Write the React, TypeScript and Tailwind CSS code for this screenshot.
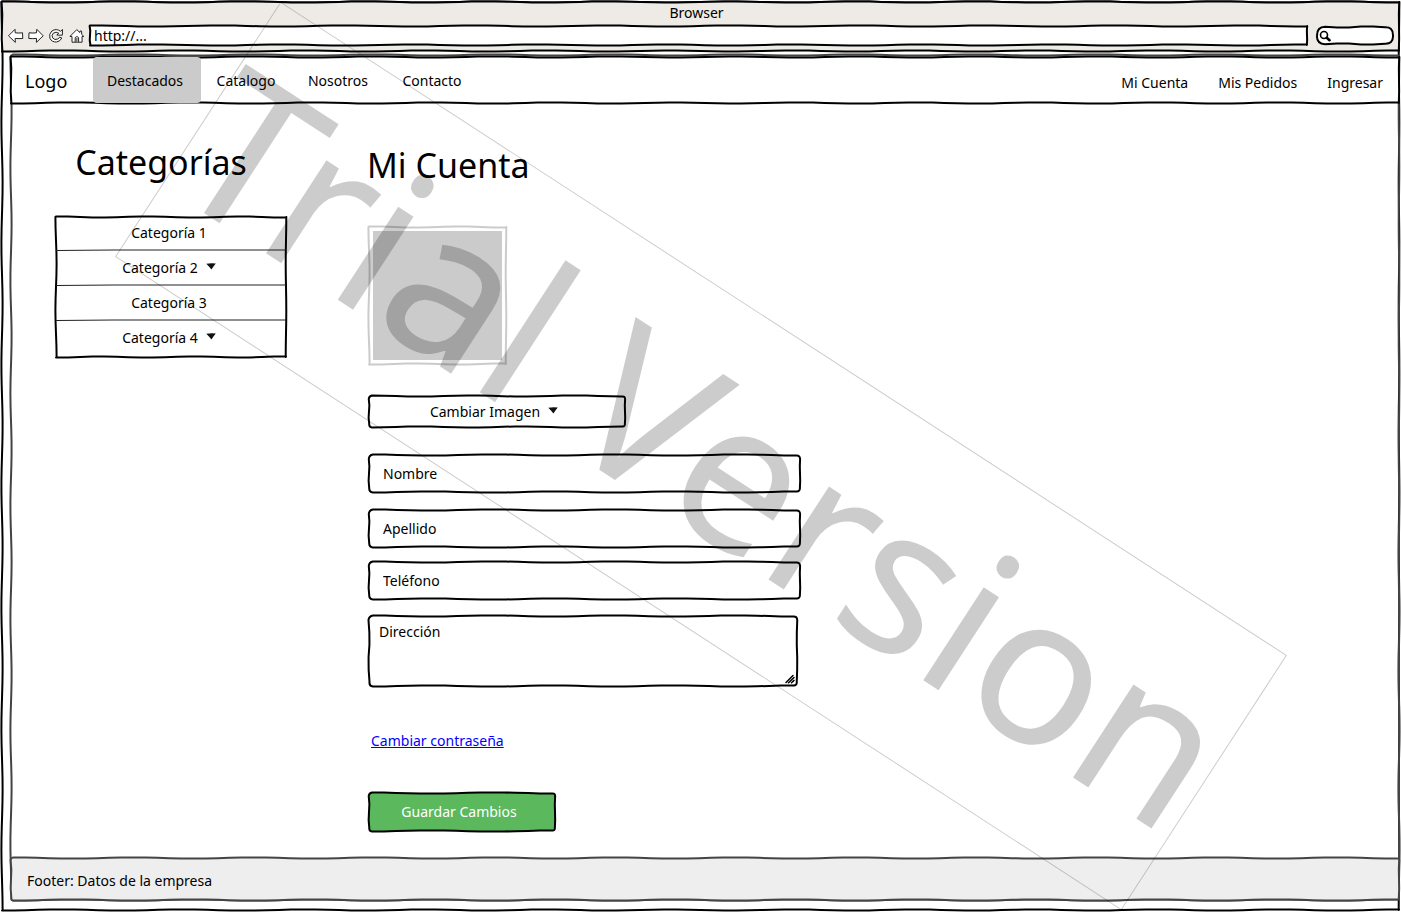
import { useLayoutEffect, useRef, useState } from "react";
import type { ReactNode } from "react";

type Size = { w: number; h: number };

function wavyPath({ w, h }: Size, r: number) {
  const m = 2;
  const wave = (t: number, len: number) => {
    const n = Math.max(1, Math.round(len / 130)) + 0.5;
    return Math.cos(t * n * 2 * Math.PI) * (len < 60 ? 0.4 : 0.6);
  };
  const pts = (len: number) => {
    const n = Math.max(4, Math.round((len - 2 * r) / 12));
    return Array.from({ length: n + 1 }, (_, i) => r + ((len - 2 * r) * i) / n);
  };
  const iw = w - 2 * m;
  const ih = h - 2 * m;
  const top = pts(iw).map((x) => [m + x, m - wave(x / iw, iw)]);
  const right = pts(ih).map((y) => [m + iw + wave(y / ih, ih) / 2, m + y]);
  const bottom = pts(iw).reverse().map((x) => [m + x, m + ih + wave(x / iw, iw)]);
  const left = pts(ih).reverse().map((y) => [m - wave(y / ih, ih), m + y]);
  const fmt = (p: number[]) => p.map((v) => v.toFixed(2)).join(" ");
  const side = (s: number[][]) => s.map((p) => "L" + fmt(p)).join("");
  const corner = (x: number, y: number, to: number[]) => (r ? `Q${x} ${y} ${fmt(to)}` : "");
  return (
    "M" + fmt(top[0]) + side(top) +
    corner(m + iw, m, right[0]) + side(right) +
    corner(m + iw, m + ih, bottom[0]) + side(bottom) +
    corner(m, m + ih, left[0]) + side(left) +
    corner(m, m, top[0]) + "Z"
  );
}

function Sketch({ r = 0, stroke = "#000", fill = "none", width = 2 }: { r?: number; stroke?: string; fill?: string; width?: number }) {
  const ref = useRef<SVGSVGElement>(null);
  const [size, setSize] = useState<Size>({ w: 0, h: 0 });
  useLayoutEffect(() => {
    const el = ref.current;
    if (!el) return;
    const measure = () => {
      const b = el.getBoundingClientRect();
      setSize({ w: b.width, h: b.height });
    };
    measure();
    const ro = new ResizeObserver(measure);
    ro.observe(el);
    return () => ro.disconnect();
  }, []);
  return (
    <svg ref={ref} aria-hidden="true" className="pointer-events-none absolute inset-0 h-full w-full overflow-visible">
      {size.w > 0 && <path d={wavyPath(size, r)} fill={fill} stroke={stroke} strokeWidth={width} strokeLinejoin="round" />}
    </svg>
  );
}

function Divider() {
  return (
    <svg aria-hidden="true" viewBox="0 0 228 4" preserveAspectRatio="none" className="pointer-events-none absolute inset-x-0 -bottom-0.5 h-1 w-full px-0.5">
      <path d="M0 2.5Q30 2 57 2T114 2T171 2T228 2" fill="none" stroke="#222" strokeWidth="1" />
    </svg>
  );
}

function Caret() {
  return (
    <svg aria-hidden="true" viewBox="0 0 10 7" className="mb-0.5 h-[7px] w-2.5">
      <path d="M0.3 0.8Q5 0 9.8 0.6Q8 2.8 5.4 6.4Q3 3.6 0.3 0.8Z" fill="#111" />
    </svg>
  );
}

const icon = { fill: "#fff", stroke: "#222", strokeWidth: 1, strokeLinejoin: "round" as const };

function BrowserBar() {
  return (
    <header className="relative h-[53px]">
      <Sketch fill="#eeebe7" />
      <div className="relative flex h-full flex-col">
        <p className="pt-0.5 pr-2 text-center leading-[22px]">Browser</p>
        <div className="flex items-center pr-1.5 pl-2">
          <div className="flex shrink-0 items-center gap-1">
            <button aria-label="Atrás" className="block">
              <svg viewBox="0 0 16 16" className="size-4" {...icon}><path d="M0.5 7.8L7 1.3L7.2 4.8Q11 5.3 14.5 4.8L14.8 10.5Q11 10.8 7.2 10.4L7.3 14.4Z" /></svg>
            </button>
            <button aria-label="Adelante" className="block">
              <svg viewBox="0 0 16 16" className="size-4" {...icon}><path d="M15.2 7.8L8.8 1.3L8.5 4.8Q5 5.3 1 4.8L0.8 10.5Q5 10.8 8.5 10.4L8.4 14.4Z" /></svg>
            </button>
            <button aria-label="Recargar" className="block">
              <svg viewBox="0 0 16 16" className="size-4" {...icon}><path d="M14.5 1.5L14.3 7.2L8.8 7L10.8 5.2Q8 3.2 5.4 5.1Q3.2 7.2 4.6 9.8Q6.5 12.6 9.8 11Q11 10.4 11.6 9.2L13.8 10Q12.2 13.5 8.6 14Q3.7 14.3 1.9 10.2Q0.6 6 3.9 3Q8.3 0 12.5 3.3Z" /></svg>
            </button>
            <button aria-label="Inicio" className="ml-px block">
              <svg viewBox="0 0 16 16" className="size-4" {...icon}><path d="M1 8.4L7.8 1.6L10.8 4.5L11 3L12.6 3.1L12.7 6.4L14.8 8.4L13 8.6L13.1 14.2L3 14.2L3 8.5Z" /><path d="M6.2 14V9.6Q7.9 7.4 9.6 9.6V14M7.9 10V14" /></svg>
            </button>
          </div>
          <div className="relative ml-[3px] h-[23px] min-w-0 flex-1">
            <Sketch fill="#fff" />
            <input aria-label="Dirección web" defaultValue="http://..." className="relative block h-full w-full bg-transparent px-1.5 outline-none" />
          </div>
          <div className="relative ml-1.5 flex h-[21px] w-20 shrink-0 items-center">
            <Sketch fill="#fff" r={8} />
            <svg aria-hidden="true" viewBox="0 0 12 12" className="relative ml-1 size-3" fill="none" stroke="#000" strokeLinecap="round"><circle cx="5" cy="5" r="3.5" strokeWidth="1.6" /><path d="M7.8 7.8L10.5 10.2" strokeWidth="2.6" /></svg>
            <input aria-label="Buscar" className="relative min-w-0 flex-1 bg-transparent outline-none" />
          </div>
        </div>
      </div>
    </header>
  );
}

function Navbar() {
  return (
    <nav className="relative mt-0.5 h-[50px]">
      <Sketch fill="#fff" />
      <div className="relative flex h-full items-center justify-between">
        <div className="flex h-full items-center">
          <a href="#logo" className="w-[84px] pt-0.5 pl-4 text-lg">Logo</a>
          <a href="#destacados" className="flex h-[46px] w-[108px] items-center justify-center rounded bg-[#cbcbcb] pt-0.5 pr-1">Destacados</a>
          <a href="#catalogo" className="w-[90px] pt-0.5 text-center">Catalogo</a>
          <a href="#nosotros" className="w-[94px] pt-0.5 text-center">Nosotros</a>
          <a href="#contacto" className="w-[94px] pt-0.5 text-center">Contacto</a>
        </div>
        <div className="flex gap-[30px] pt-1.5 pr-[18px]">
          <a href="#cuenta">Mi Cuenta</a>
          <a href="#pedidos">Mis Pedidos</a>
          <a href="#ingresar">Ingresar</a>
        </div>
      </div>
    </nav>
  );
}

const categories = [
  { name: "Categoría 1", menu: false },
  { name: "Categoría 2", menu: true },
  { name: "Categoría 3", menu: false },
  { name: "Categoría 4", menu: true },
];

function Sidebar() {
  return (
    <aside className="w-[234px] shrink-0 pt-[31px]">
      <h2 className="pr-5 text-center text-[34px] leading-[52px]">Categorías</h2>
      <ul className="relative mt-[27px] pb-1">
        <Sketch />
        {categories.map((c, i) => (
          <li key={c.name} className="relative h-[35px]">
            <button className="flex h-full w-full items-center justify-center gap-2 pr-1">
              {c.name}
              {c.menu && <Caret />}
            </button>
            {i < categories.length - 1 && <Divider />}
          </li>
        ))}
      </ul>
    </aside>
  );
}

function Field({ id, label, className }: { id: string; label: string; className: string }) {
  return (
    <div className={"relative h-[41px] w-[435px] max-w-full " + className}>
      <Sketch r={4} />
      <input id={id} aria-label={label} defaultValue={label} className="relative block h-full w-full bg-transparent px-4 outline-none" />
    </div>
  );
}

function Account() {
  return (
    <main className="min-w-0 flex-1 pt-[34px]">
      <h1 className="text-[34px] leading-[52px]">Mi Cuenta</h1>
      <div role="img" aria-label="Imagen de perfil" className="relative mt-[34px] size-[141px] p-1.5">
        <Sketch stroke="#cbcbcb" />
        <div className="h-full w-full bg-[#cbcbcb]" />
      </div>
      <Button className="mt-7 h-[35px] w-[260px]">Cambiar Imagen<Caret /></Button>
      <form onSubmit={(e) => e.preventDefault()}>
        <Field id="nombre" label="Nombre" className="mt-6" />
        <Field id="apellido" label="Apellido" className="mt-3.5" />
        <Field id="telefono" label="Teléfono" className="mt-[11px]" />
        <div className="relative mt-[13px] h-[74px] w-[432px] max-w-full">
          <Sketch r={4} />
          <textarea id="direccion" aria-label="Dirección" defaultValue="Dirección" className="relative block h-full w-full resize-none bg-transparent px-3 pt-2 leading-5 outline-none" />
          <svg aria-hidden="true" viewBox="0 0 10 10" className="absolute right-1 bottom-1 size-2.5" fill="none" stroke="#000" strokeWidth="1.5" strokeLinecap="round"><path d="M1 8.5L8 1.5M3.5 8.8L9 3.5M6.5 8.8L9 6.4" /></svg>
        </div>
        <a href="#contrasena" className="mt-[43px] ml-1 block w-fit leading-5 text-[#00f] underline">Cambiar contraseña</a>
        <Button className="mt-10 h-[42px] w-[190px] text-white" fill="#5cb85c">Guardar Cambios</Button>
      </form>
    </main>
  );
}

function Button({ children, className, fill = "none" }: { children: ReactNode; className: string; fill?: string }) {
  return (
    <button className={"relative block " + className}>
      <Sketch r={3} fill={fill} />
      <span className="relative flex items-center justify-center gap-2 pr-1.5">{children}</span>
    </button>
  );
}

function Watermark() {
  return (
    <div className="pointer-events-none absolute inset-0 flex items-center justify-center overflow-hidden">
      <div className="flex h-[304px] w-[1200px] shrink-0 rotate-33 items-center justify-center border border-black/20 pb-[26px] text-[207px] leading-none whitespace-nowrap text-black/20">
        Trial Version
      </div>
    </div>
  );
}

export default function App() {
  return (
    <div className="relative flex min-h-screen flex-col bg-white font-['Noto_Sans',sans-serif] text-sm text-black">
      <Sketch />
      <BrowserBar />
      <div className="relative ml-[9px] flex flex-1 flex-col pb-2.5">
        <div className="relative flex flex-1 flex-col">
          <Sketch stroke="#444" r={2} />
          <Navbar />
          <div className="relative flex flex-1 gap-[79px] pl-[45px]">
            <Sidebar />
            <Account />
          </div>
          <footer className="relative flex h-[46px] items-center px-[18px] pt-1">
            <Sketch stroke="#444" fill="#eee" r={2} />
            <p className="relative">Footer: Datos de la empresa</p>
          </footer>
        </div>
      </div>
      <Watermark />
    </div>
  );
}
